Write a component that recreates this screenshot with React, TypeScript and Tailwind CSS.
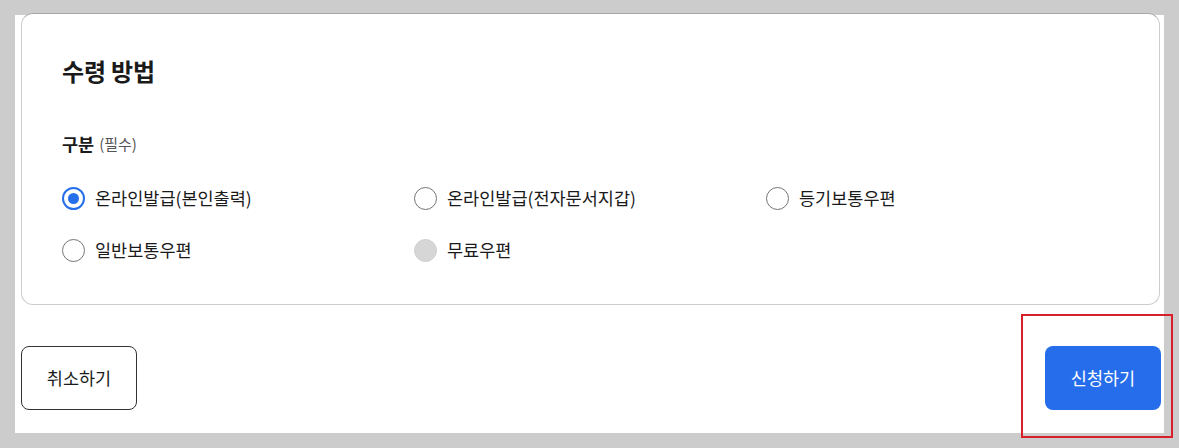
import React, { useState } from 'react';

const options = [
  { id: 'self', label: '온라인발급(본인출력)' },
  { id: 'wallet', label: '온라인발급(전자문서지갑)' },
  { id: 'registered', label: '등기보통우편' },
  { id: 'normal', label: '일반보통우편' },
  { id: 'free', label: '무료우편', disabled: true },
];

const Radio: React.FC<{ checked: boolean; disabled?: boolean }> = ({ checked, disabled }) => {
  if (disabled) {
    return <span className="w-[23px] h-[23px] rounded-full bg-[#d6d6d6] border border-[#cfcfcf] shrink-0" />;
  }
  if (checked) {
    return (
      <span className="w-[23px] h-[23px] rounded-full border-[2px] border-[#2570ea] flex items-center justify-center shrink-0">
        <span className="w-[11px] h-[11px] rounded-full bg-[#2570ea]" />
      </span>
    );
  }
  return <span className="w-[23px] h-[23px] rounded-full border border-[#747474] bg-white shrink-0" />;
};

export default function App() {
  const [selected, setSelected] = useState('self');

  return (
    <div
      className="w-[1179px] h-[448px] bg-[#cccccc] pt-[15px] pl-[15px] relative overflow-hidden text-[#1a1a1a]"
      style={{ fontFamily: '"Noto Sans CJK KR", "Noto Sans", sans-serif' }}
    >
      <div className="w-[1149px] h-[418px] bg-white pl-[6px] pr-[4px] flex flex-col">
        {/* 수령 방법 카드 */}
        <div className="-mt-[2px] w-[1139px] h-[292px] rounded-[12px] border border-[#cdcdcd] border-t-[#a8a8a8] bg-white pt-[41px] px-[40px]">
          <h2 className="text-[24px] leading-[32px] font-bold tracking-[-0.2px]">수령 방법</h2>

          <div className="mt-[45px] flex items-center gap-[5px] leading-[24px]">
            <span className="text-[17.5px] font-bold">구분</span>
            <span className="text-[15px] text-[#555]">(필수)</span>
          </div>

          <div className="mt-[26px] grid grid-cols-[352px_352px_352px] gap-y-[20px]">
            {options.map(opt => (
              <button
                key={opt.id}
                type="button"
                disabled={opt.disabled}
                onClick={() => setSelected(opt.id)}
                className="h-[32px] flex items-center gap-[10px] text-left"
              >
                <Radio checked={selected === opt.id} disabled={opt.disabled} />
                <span className="text-[17.5px] leading-[24px] text-[#1a1a1a]">{opt.label}</span>
              </button>
            ))}
          </div>
        </div>

        {/* 버튼 */}
        <div className="mt-[41px] flex justify-between">
          <button
            type="button"
            className="w-[116px] h-[64px] rounded-[8px] border border-[#333] bg-white text-[17.5px] text-[#1a1a1a]"
          >
            취소하기
          </button>
          <button
            type="button"
            className="w-[116px] h-[64px] rounded-[8px] bg-[#256dea] text-[17.5px] text-white -mr-[1px]"
          >
            신청하기
          </button>
        </div>
      </div>

      {/* 강조 표시 */}
      <div className="absolute left-[1021px] top-[314px] w-[152px] h-[124px] border-2 border-[#d8202a] pointer-events-none" />
    </div>
  );
}
